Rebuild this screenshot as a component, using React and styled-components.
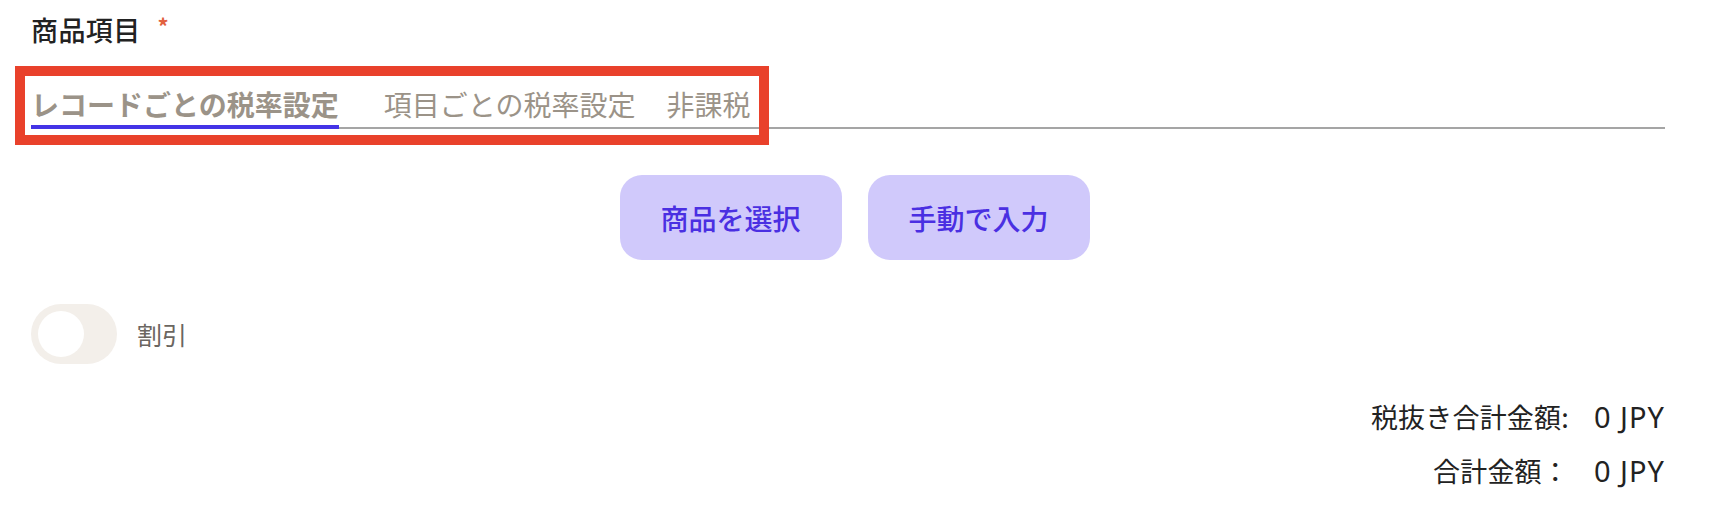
import React, { useState } from "react";
import styled, { createGlobalStyle } from "styled-components";

const Global = createGlobalStyle`
  html, body { margin: 0; padding: 0; background: #ffffff; }
  body { font-family: "Noto Sans CJK JP", "Noto Sans", sans-serif; }
  * { box-sizing: border-box; }
`;

const Page = styled.div`
  width: 1714px;
  padding: 10px 49px 0 31px;
  display: flex;
  flex-direction: column;
`;

const FieldLabel = styled.div`
  display: flex;
  align-items: flex-start;
  gap: 17px;
  font-size: 27px;
  line-height: 39px;
  font-weight: 500;
  color: #222222;
  letter-spacing: 0.4px;
`;

const Required = styled.span`
  color: #e2613f;
  font-size: 22px;
  line-height: 30px;
  font-weight: 700;
`;

const TabBar = styled.div`
  margin-top: 35px;
  border-bottom: 2px solid #a5a5a5;
  display: flex;
`;

const TabList = styled.div`
  position: relative;
  display: flex;
  &::after {
    content: "";
    position: absolute;
    left: -16px;
    top: -18px;
    right: -19px;
    bottom: -18px;
    border: 10px solid #e9412b;
    pointer-events: none;
  }
`;

const Tab = styled.button`
  appearance: none;
  background: none;
  border: none;
  padding: 0 0 1px;
  margin: 0 0 -2px ${(p) => p.$offset || 0}px;
  font-family: inherit;
  font-size: 28px;
  line-height: 40px;
  font-weight: ${(p) => (p.$active ? 700 : 400)};
  color: #9b9388;
  border-bottom: 4px solid ${(p) => (p.$active ? "#4433e6" : "transparent")};
  cursor: pointer;
`;

const ButtonRow = styled.div`
  margin-top: 46px;
  display: flex;
  justify-content: center;
  gap: 26px;
  padding-left: 13px;
`;

const ActionButton = styled.button`
  appearance: none;
  border: none;
  height: 85px;
  width: 222px;
  border-radius: 22px;
  background: #d0c9fb;
  color: #4a2fe2;
  font-family: inherit;
  font-size: 28px;
  font-weight: 500;
  cursor: pointer;
`;

const ToggleRow = styled.div`
  margin-top: 44px;
  display: flex;
  align-items: center;
  gap: 20px;
`;

const Switch = styled.button`
  appearance: none;
  border: none;
  padding: 7px;
  width: 86px;
  height: 60px;
  border-radius: 30px;
  background: ${(p) => (p.$on ? "#4433e6" : "#f3efea")};
  display: flex;
  justify-content: ${(p) => (p.$on ? "flex-end" : "flex-start")};
  cursor: pointer;
`;

const Knob = styled.span`
  width: 46px;
  height: 46px;
  border-radius: 50%;
  background: #ffffff;
`;

const ToggleLabel = styled.span`
  font-size: 25px;
  color: #6b6661;
`;

const Totals = styled.div`
  margin-top: 33px;
  align-self: flex-end;
  display: grid;
  grid-template-columns: auto auto;
  column-gap: 25px;
  row-gap: 15px;
  font-size: 27px;
  line-height: 39px;
  color: #222222;
`;

const TotalLabel = styled.span`
  text-align: right;
  letter-spacing: 0.2px;
`;

const TotalValue = styled.span`
  font-family: "Noto Sans", "Noto Sans CJK JP", sans-serif;
  font-size: 29px;
  letter-spacing: 1px;
`;

const TABS = [
  { label: "レコードごとの税率設定", offset: 0 },
  { label: "項目ごとの税率設定", offset: 45 },
  { label: "非課税", offset: 31 },
];

export default function App() {
  const [tab, setTab] = useState(0);
  const [discount, setDiscount] = useState(false);
  return (
    <Page>
      <Global />
      <FieldLabel>
        商品項目<Required>*</Required>
      </FieldLabel>
      <TabBar>
        <TabList>
          {TABS.map((t, i) => (
            <Tab
              key={t.label}
              $offset={t.offset}
              $active={tab === i}
              onClick={() => setTab(i)}
            >
              {t.label}
            </Tab>
          ))}
        </TabList>
      </TabBar>
      <ButtonRow>
        <ActionButton>商品を選択</ActionButton>
        <ActionButton>手動で入力</ActionButton>
      </ButtonRow>
      <ToggleRow>
        <Switch $on={discount} onClick={() => setDiscount(!discount)}>
          <Knob />
        </Switch>
        <ToggleLabel>割引</ToggleLabel>
      </ToggleRow>
      <Totals>
        <TotalLabel>税抜き合計金額:</TotalLabel>
        <TotalValue>0 JPY</TotalValue>
        <TotalLabel>合計金額：</TotalLabel>
        <TotalValue>0 JPY</TotalValue>
      </Totals>
    </Page>
  );
}
